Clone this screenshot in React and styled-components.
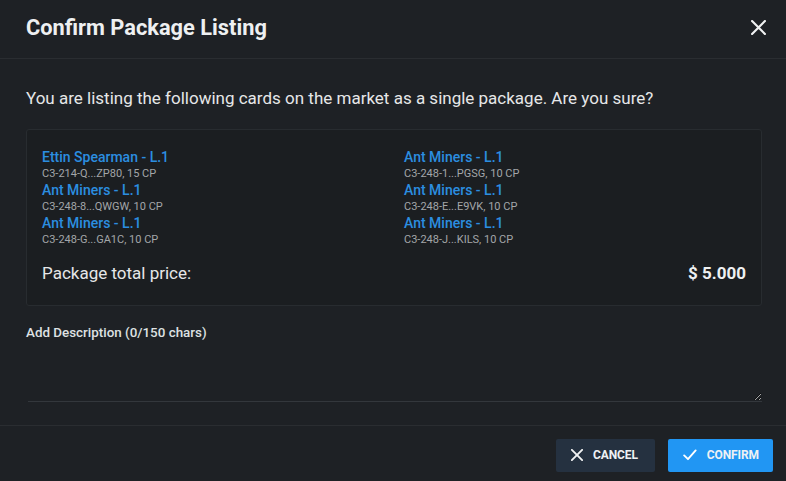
import React from 'react';
import styled, { createGlobalStyle } from 'styled-components';

const GlobalStyle = createGlobalStyle`
  html, body {
    margin: 0;
    padding: 0;
    background: #1e2125;
    font-family: Roboto, "Noto Sans", sans-serif;
    overflow: hidden;
  }
  * { box-sizing: border-box; }
`;

const Dialog = styled.div`
  width: 786px;
  height: 481px;
  background: #1e2125;
  color: #e8e9ea;
  display: flex;
  flex-direction: column;
`;

const Header = styled.div`
  height: 59px;
  display: flex;
  align-items: center;
  justify-content: space-between;
  padding: 0 18px 4px 26px;
  border-bottom: 1px solid #2a2d31;
`;

const Title = styled.h2`
  margin: 0;
  font-size: 21.8px;
  font-weight: 700;
  color: #eef0f1;
`;

const CloseButton = styled.button`
  background: none;
  border: 0;
  padding: 0;
  width: 20px;
  height: 20px;
  display: flex;
  align-items: center;
  justify-content: center;
  cursor: pointer;
`;

const Body = styled.div`
  padding: 29px 24px 0 26px;
  flex: 1;
`;

const Intro = styled.p`
  margin: 0 0 21px;
  font-size: 17px;
  line-height: 20px;
  color: #e6e7e8;
`;

const Card = styled.div`
  background: #1b1e21;
  border: 1px solid #282c30;
  border-radius: 3px;
  padding: 19px 15px 22px;
`;

const CardGrid = styled.div`
  display: grid;
  grid-template-columns: 1fr 1fr;
  column-gap: 20px;
`;

const Column = styled.div`
  display: flex;
  flex-direction: column;
`;

const Item = styled.div`
  display: flex;
  flex-direction: column;
`;

const ItemName = styled.a`
  font-size: 14px;
  font-weight: 500;
  line-height: 17px;
  color: #2b8ee0;
  text-decoration: none;
`;

const ItemMeta = styled.span`
  font-size: 11px;
  line-height: 16px;
  color: #a3a6a9;
`;

const TotalRow = styled.div`
  display: flex;
  justify-content: space-between;
  align-items: center;
  margin-top: 15px;
`;

const TotalLabel = styled.span`
  font-size: 17px;
  font-weight: 400;
  line-height: 20px;
  color: #e6e7e8;
`;

const TotalValue = styled.span`
  font-size: 17px;
  font-weight: 700;
  line-height: 20px;
  color: #eef0f1;
`;

const Label = styled.label`
  display: block;
  margin-top: 19px;
  font-size: 13.4px;
  line-height: 16px;
  font-weight: 500;
  color: #dfe1e3;
`;

const TextArea = styled.textarea`
  display: block;
  width: 734px;
  height: 54px;
  margin: 7px 0 0 2px;
  background: transparent;
  border: 0;
  border-bottom: 1px solid #33373c;
  color: #e6e7e8;
  font-family: Roboto, sans-serif;
  font-size: 13px;
  outline: none;
  resize: vertical;
`;

const Footer = styled.div`
  border-top: 1px solid #2a2d31;
  height: 56px;
  display: flex;
  justify-content: flex-end;
  align-items: center;
  gap: 13px;
  padding: 3px 13px 0 0;
`;

const Button = styled.button`
  height: 33px;
  border: 0;
  border-radius: 2px;
  display: flex;
  align-items: center;
  gap: 10px;
  padding: 0 14px 0 15px;
  font-family: Roboto, sans-serif;
  font-size: 12px;
  font-weight: 700;
  letter-spacing: -0.1px;
  text-transform: uppercase;
  color: #eef1f4;
  cursor: pointer;
  background: ${p => (p.$primary ? '#2196f3' : '#253140')};
  width: ${p => (p.$primary ? '105px' : '99px')};
`;

const cards = [
  [
    { name: 'Ettin Spearman - L.1', meta: 'C3-214-Q...ZP80, 15 CP' },
    { name: 'Ant Miners - L.1', meta: 'C3-248-8...QWGW, 10 CP' },
    { name: 'Ant Miners - L.1', meta: 'C3-248-G...GA1C, 10 CP' },
  ],
  [
    { name: 'Ant Miners - L.1', meta: 'C3-248-1...PGSG, 10 CP' },
    { name: 'Ant Miners - L.1', meta: 'C3-248-E...E9VK, 10 CP' },
    { name: 'Ant Miners - L.1', meta: 'C3-248-J...KILS, 10 CP' },
  ],
];

const CloseIcon = ({ size = 14, width = 2 }) => (
  <svg width={size} height={size} viewBox="0 0 14 14">
    <path d="M1 1L13 13M13 1L1 13" stroke="#f1f2f3" strokeWidth={width} strokeLinecap="round" />
  </svg>
);

const CheckIcon = () => (
  <svg width="18" height="16" viewBox="0 0 18 16">
    <path d="M1.5 8.5L6.5 13.5L16.5 2" stroke="#ffffff" strokeWidth="2.4" fill="none" strokeLinecap="round" strokeLinejoin="round" />
  </svg>
);

export default function App() {
  return (
    <>
      <GlobalStyle />
      <Dialog>
        <Header>
          <Title>Confirm Package Listing</Title>
          <CloseButton aria-label="Close">
            <CloseIcon size={15} />
          </CloseButton>
        </Header>
        <Body>
          <Intro>You are listing the following cards on the market as a single package. Are you sure?</Intro>
          <Card>
            <CardGrid>
              {cards.map((col, i) => (
                <Column key={i}>
                  {col.map((c, j) => (
                    <Item key={j}>
                      <ItemName href="#">{c.name}</ItemName>
                      <ItemMeta>{c.meta}</ItemMeta>
                    </Item>
                  ))}
                </Column>
              ))}
            </CardGrid>
            <TotalRow>
              <TotalLabel>Package total price:</TotalLabel>
              <TotalValue>$ 5.000</TotalValue>
            </TotalRow>
          </Card>
          <Label>Add Description (0/150 chars)</Label>
          <TextArea />
        </Body>
        <Footer>
          <Button>
            <CloseIcon size={12} width={2.2} />
            Cancel
          </Button>
          <Button $primary>
            <CheckIcon />
            Confirm
          </Button>
        </Footer>
      </Dialog>
    </>
  );
}
